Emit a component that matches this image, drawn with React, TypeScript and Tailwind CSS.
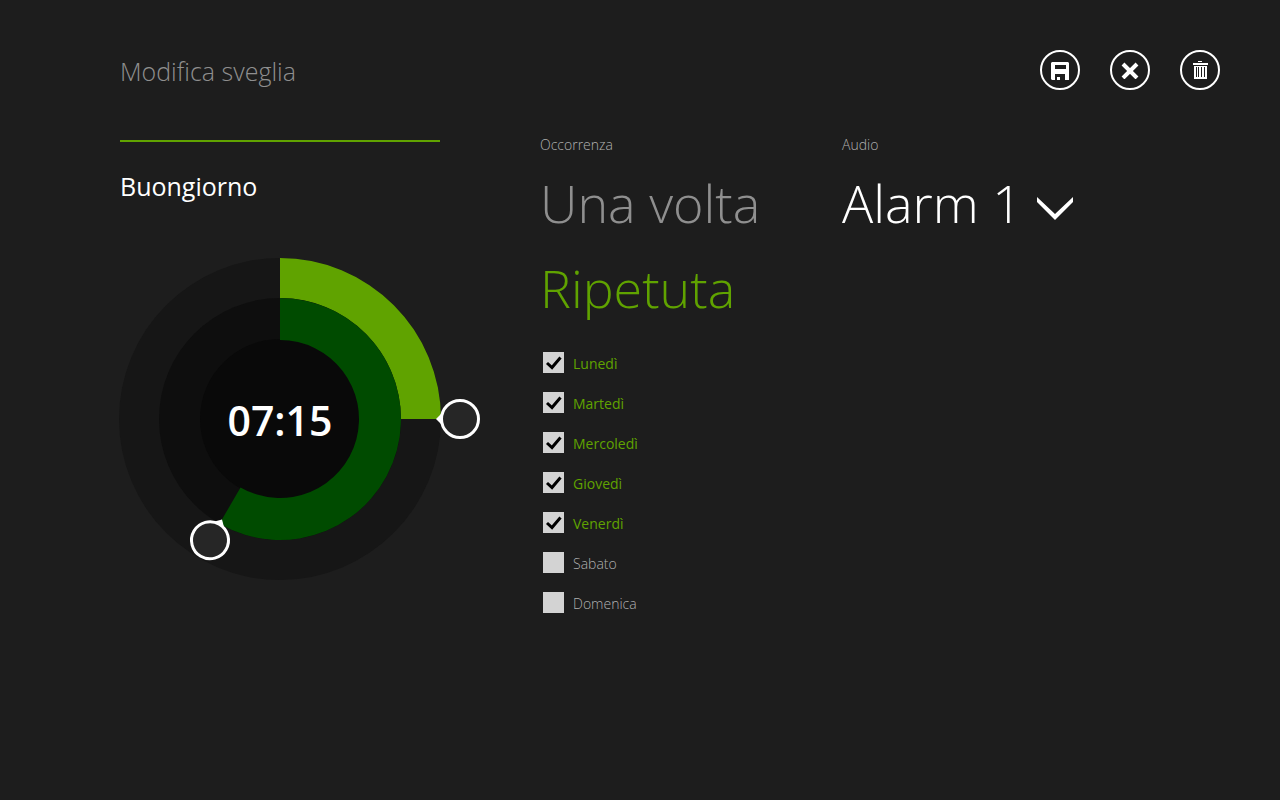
import type React from "react";
import { useState } from "react";

interface Day {
  id: string;
  label: string;
  enabled: boolean;
}

const initialDays: Day[] = [
  { id: "lun", label: "Lunedì", enabled: true },
  { id: "mar", label: "Martedì", enabled: true },
  { id: "mer", label: "Mercoledì", enabled: true },
  { id: "gio", label: "Giovedì", enabled: true },
  { id: "ven", label: "Venerdì", enabled: true },
  { id: "sab", label: "Sabato", enabled: false },
  { id: "dom", label: "Domenica", enabled: false },
];

const occurrences = [
  { id: "once", label: "Una volta" },
  { id: "repeat", label: "Ripetuta" },
];

const CENTER = 160;

const point = (angle: number, radius: number) => {
  const rad = (angle * Math.PI) / 180;
  return {
    x: CENTER + radius * Math.sin(rad),
    y: CENTER - radius * Math.cos(rad),
  };
};

const ringSector = (angle: number, inner: number, outer: number) => {
  const a = point(0, outer);
  const b = point(angle, outer);
  const c = point(angle, inner);
  const d = point(0, inner);
  const large = angle > 180 ? 1 : 0;
  return `M${a.x} ${a.y} A${outer} ${outer} 0 ${large} 1 ${b.x} ${b.y} L${c.x} ${c.y} A${inner} ${inner} 0 ${large} 0 ${d.x} ${d.y} Z`;
};

const Handle: React.FC<{ angle: number; radius: number }> = ({ angle, radius }) => (
  <g transform={`rotate(${angle} ${CENTER} ${CENTER}) translate(${CENTER} ${CENTER - radius})`}>
    <path d="M-6 18 L0 24 L6 18 Z" fill="#fff" />
    <circle r="18.5" fill="#262626" stroke="#fff" strokeWidth="3" />
  </g>
);

const Dial: React.FC<{ hours: number; minutes: number }> = ({ hours, minutes }) => {
  const hourAngle = (hours % 12) * 30;
  const minuteAngle = minutes * 6;
  const time = `${String(hours).padStart(2, "0")}:${String(minutes).padStart(2, "0")}`;

  return (
    <div className="relative size-80">
      <svg viewBox="0 0 320 320" className="size-full overflow-visible" aria-hidden="true">
        <circle cx="160" cy="160" r="161" fill="#161616" />
        <circle cx="160" cy="160" r="121" fill="#0e0e0e" />
        <circle cx="160" cy="160" r="80" fill="#090909" />
        <path d={ringSector(minuteAngle, 121, 161)} fill="#60a300" />
        <path d={ringSector(hourAngle, 79, 121)} fill="#004b00" />
        <Handle angle={minuteAngle} radius={180} />
        <Handle angle={hourAngle} radius={140} />
      </svg>
      <time className="absolute inset-0 flex items-center justify-center pt-1 text-[41px] font-semibold text-white">
        {time}
      </time>
    </div>
  );
};

const RoundButton: React.FC<{ label: string; children: React.ReactNode }> = ({
  label,
  children,
}) => (
  <button
    type="button"
    aria-label={label}
    className="flex size-10 items-center justify-center rounded-full border-2 border-white text-white"
  >
    {children}
  </button>
);

const SaveIcon = () => (
  <svg width="18" height="20" viewBox="0 0 18 20" fill="currentColor">
    <path
      fillRule="evenodd"
      d="M1 2H17L18 3V20H14V14H4V20H1L0 19V3Z M4 5V9H15V5Z"
    />
    <path d="M6 17H9V20H6Z" />
  </svg>
);

const CancelIcon = () => (
  <svg width="18" height="18" viewBox="0 0 18 18" stroke="currentColor" strokeWidth="4">
    <path d="M2 3 L16 17 M16 3 L2 17" />
  </svg>
);

const TrashIcon = () => (
  <svg width="16" height="18" viewBox="0 0 16 18" fill="currentColor">
    <path d="M6 0H10V1H6Z M1 2H16V4H1Z" />
    <path
      fillRule="evenodd"
      d="M2 5H15V18H2Z M4 6V16H5V6Z M6 6V16H7V6Z M9 6V16H10V6Z M12 6V16H13V6Z"
    />
  </svg>
);

export default function App() {
  const [name, setName] = useState("Buongiorno");
  const [occurrence, setOccurrence] = useState("repeat");
  const [sound, setSound] = useState("Alarm 1");
  const [days, setDays] = useState(initialDays);

  const toggleDay = (id: string) =>
    setDays(days.map((day) => (day.id === id ? { ...day, enabled: !day.enabled } : day)));

  return (
    <div className="min-h-screen bg-[#1d1d1d] pt-[50px] pr-[60px] pl-[120px] font-['Open_Sans',sans-serif] font-light text-[#8f8f8f]">
      <header className="flex h-10 items-start justify-between">
        <h1 className="text-[25px] leading-[42px]">Modifica sveglia</h1>
        <div className="flex gap-[30px]">
          <RoundButton label="Salva">
            <SaveIcon />
          </RoundButton>
          <RoundButton label="Annulla">
            <CancelIcon />
          </RoundButton>
          <RoundButton label="Elimina">
            <TrashIcon />
          </RoundButton>
        </div>
      </header>

      <main className="mt-[50px] flex items-start">
        <section className="mr-[100px] w-80 shrink-0 border-t-2 border-[#60a300] pt-5">
          <input
            type="text"
            aria-label="Nome"
            value={name}
            onChange={(e) => setName(e.target.value)}
            className="mb-[49px] block h-12 w-full bg-transparent text-[25px] font-normal text-white outline-none"
          />
          <Dial hours={7} minutes={15} />
        </section>

        <section className="w-[302px] shrink-0">
          <fieldset>
            <legend className="text-sm leading-[10px] text-[#b0b0b0]">Occorrenza</legend>
            <div className="pt-2.5">
              {occurrences.map(({ id, label }) => (
                <label
                  key={id}
                  className={`block text-[52px] leading-[85px] ${occurrence === id ? "text-[#60a300]" : ""}`}
                >
                  <input
                    type="radio"
                    name="occurrence"
                    checked={occurrence === id}
                    onChange={() => setOccurrence(id)}
                    className="sr-only"
                  />
                  {label}
                </label>
              ))}
            </div>
          </fieldset>

          <ul className="mt-3 ml-[3px]">
            {days.map((day) => (
              <li key={day.id} className="h-10 pt-2.5">
                <label
                  className={`flex items-start gap-[9px] text-sm leading-6 ${day.enabled ? "font-normal text-[#60a300]" : "text-[#b0b0b0]"}`}
                >
                  <span className="relative size-[21px]">
                    <input
                      type="checkbox"
                      checked={day.enabled}
                      onChange={() => toggleDay(day.id)}
                      className="block size-full appearance-none bg-[#d3d3d3]"
                    />
                    {day.enabled && (
                      <svg
                        viewBox="0 0 21 21"
                        className="pointer-events-none absolute inset-0"
                        fill="none"
                        stroke="#000"
                        strokeWidth="3"
                      >
                        <path d="M4 11 L9 15.5 L17.5 5.5" />
                      </svg>
                    )}
                  </span>
                  {day.label}
                </label>
              </li>
            ))}
          </ul>
        </section>

        <section className="shrink-0">
          <label htmlFor="sound" className="block text-sm leading-[10px] text-[#b0b0b0]">
            Audio
          </label>
          <div className="relative pt-2.5">
            <select
              id="sound"
              value={sound}
              onChange={(e) => setSound(e.target.value)}
              className="h-[85px] w-60 appearance-none bg-transparent text-[52px] text-white outline-none"
            >
              <option>Alarm 1</option>
            </select>
            <svg
              viewBox="0 0 36 23"
              className="pointer-events-none absolute top-[47px] left-[195px] w-9"
              fill="#fff"
            >
              <path d="M0 0 L18 17 L36 0 V5 L18 23 L0 5 Z" />
            </svg>
          </div>
        </section>
      </main>
    </div>
  );
}
